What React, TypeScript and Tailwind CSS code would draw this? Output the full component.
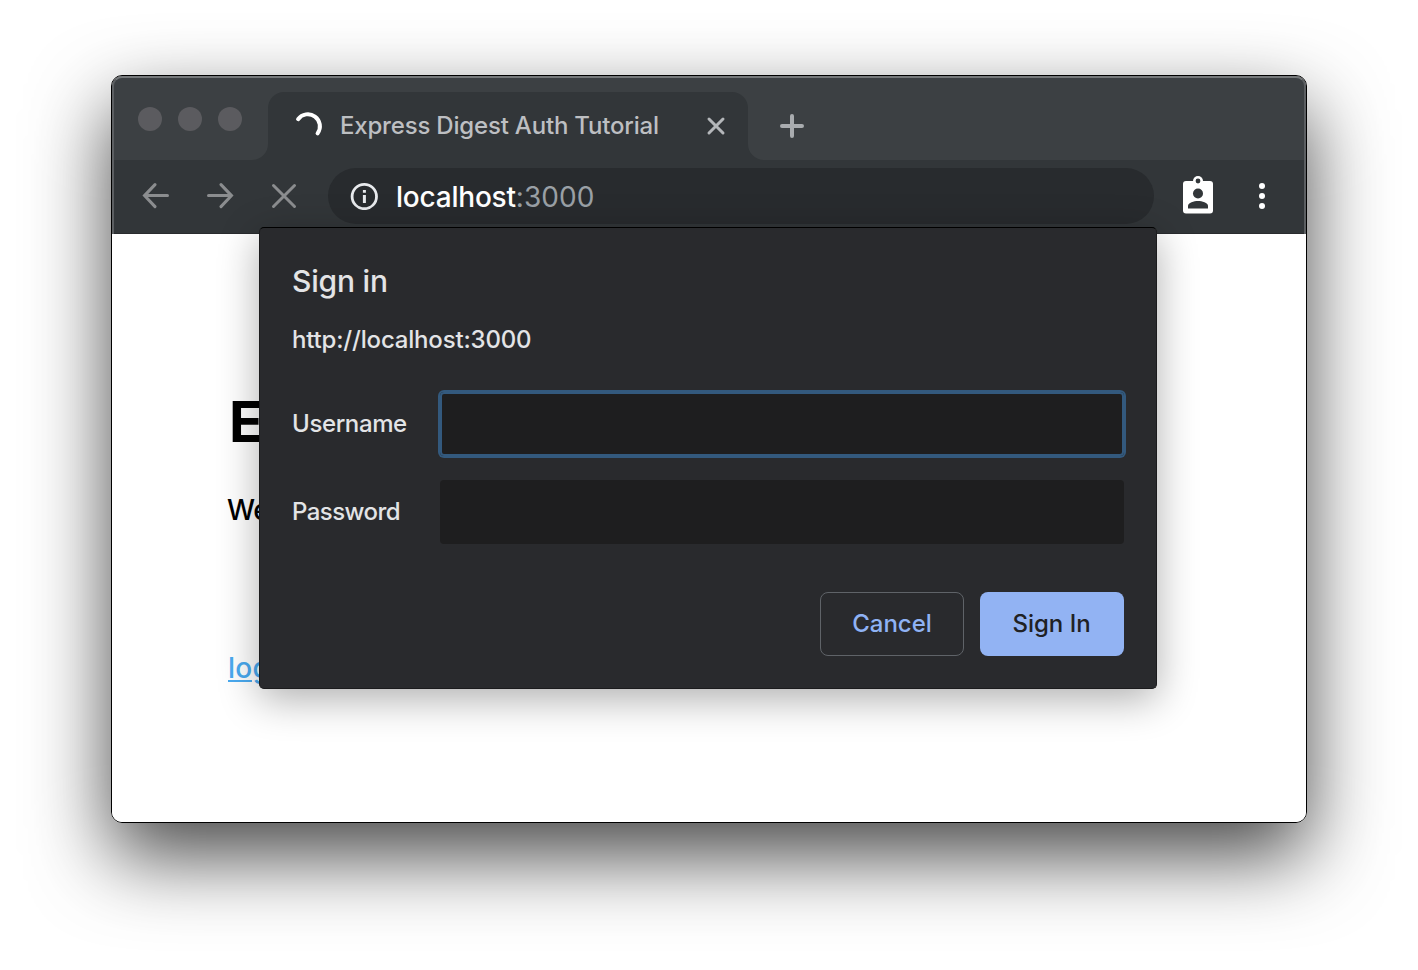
import React from "react";

function TrafficLights() {
  return (
    <div className="mt-[31px] ml-[26px] flex h-6 w-[130px] shrink-0 gap-4">
      <span className="size-6 rounded-full bg-[#5b5b5f]" />
      <span className="size-6 rounded-full bg-[#5b5b5f]" />
      <span className="size-6 rounded-full bg-[#5b5b5f]" />
    </div>
  );
}

function TabStrip() {
  return (
    <div className="flex h-[84px] bg-[#3c4043]">
      <TrafficLights />
      <div className="relative mt-4 flex h-[68px] w-[480px] shrink-0 items-center rounded-t-2xl bg-[#323639]">
        <svg className="absolute bottom-0 -left-4 size-4" viewBox="0 0 16 16" fill="#323639">
          <path d="M0 16A16 16 0 0 0 16 0V16Z" />
        </svg>
        <svg className="absolute -right-4 bottom-0 size-4" viewBox="0 0 16 16" fill="#323639">
          <path d="M16 16A16 16 0 0 1 0 0V16Z" />
        </svg>
        <svg className="ml-6 size-8 shrink-0" viewBox="0 0 32 32" fill="none" stroke="#fff" strokeWidth="4" strokeLinecap="round">
          <path d="M6.1 9.2A12 12 0 0 1 25.6 23.4" />
        </svg>
        <span className="ml-4 w-[340px] text-[24px] leading-8 font-[450] tracking-[-0.19px] whitespace-nowrap text-[#bdbfc2]">
          Express Digest Auth Tutorial
        </span>
        <svg className="ml-[26px] size-5 shrink-0" viewBox="0 0 20 20" fill="none" stroke="#b4b7ba" strokeWidth="3" strokeLinecap="round">
          <path d="M3 3 17 17M17 3 3 17" />
        </svg>
      </div>
      <svg className="mt-[38px] ml-8 size-6" viewBox="0 0 24 24" fill="none" stroke="#a9acaf" strokeWidth="4" strokeLinecap="round">
        <path d="M12 2V22M2 12H22" />
      </svg>
    </div>
  );
}

function Toolbar() {
  return (
    <div className="flex h-[74px] border-b border-[#292b2e] bg-[#323639]">
      <svg className="mt-[23px] ml-[30px] size-7 shrink-0" viewBox="0 0 28 28" fill="none" stroke="#8b8d8f" strokeWidth="3" strokeLinecap="round" strokeLinejoin="miter">
        <path d="M25.5 12.6H3M13 1.6 2.5 12.6 13 23.6" />
      </svg>
      <svg className="mt-[23px] ml-9 size-7 shrink-0" viewBox="0 0 28 28" fill="none" stroke="#8b8d8f" strokeWidth="3" strokeLinecap="round" strokeLinejoin="miter">
        <path d="M2.5 12.6H25M15 1.6 25.5 12.6 15 23.6" />
      </svg>
      <svg className="mt-[23px] ml-9 size-7 shrink-0" viewBox="0 0 28 28" fill="none" stroke="#8b8d8f" strokeWidth="3" strokeLinecap="round">
        <path d="M3.5 2.5 24.5 23.5M24.5 2.5 3.5 23.5" />
      </svg>
      <div className="mt-2 ml-[30px] flex h-14 w-[826px] shrink-0 items-center rounded-full bg-[#282b2e] pl-[22px]">
        <svg className="size-7 shrink-0" viewBox="0 0 28 28" fill="none">
          <circle cx="14.3" cy="14.5" r="12.2" stroke="#e8eaed" strokeWidth="2.8" />
          <path d="M12.9 8h3v2.8h-3zM12.9 13h3v8h-3z" fill="#e8eaed" />
        </svg>
        <span className="mt-px ml-[18px] text-[28px] leading-8 font-[450] tracking-[-0.22px] text-white">
          localhost<span className="font-normal tracking-[0.1px] text-[#9aa0a6]">:3000</span>
        </span>
      </div>
      <svg className="mt-4 ml-7 h-[38px] w-8 shrink-0" viewBox="0 0 32 38">
        <rect x="1" y="5" width="30" height="32.5" rx="3" fill="#fff" />
        <circle cx="16" cy="5" r="5" fill="#fff" />
        <circle cx="16" cy="5" r="2.4" fill="#323639" />
        <circle cx="16" cy="17.5" r="5" fill="#323639" />
        <path d="M6 32.5V30C6 26.7 12 25 16 25S26 26.7 26 30V32.5Z" fill="#323639" />
      </svg>
      <svg className="mt-[22px] ml-[45px] h-7 w-[6px] shrink-0" viewBox="0 0 6 28" fill="#fff">
        <circle cx="3" cy="4" r="3" />
        <circle cx="3" cy="14" r="3" />
        <circle cx="3" cy="24" r="3" />
      </svg>
    </div>
  );
}

function PageContent() {
  return (
    <main className="flex flex-1 flex-col items-start bg-white pl-[116px] text-black">
      <h1 className="mt-[154px] ml-px text-[56px] leading-[68px] font-bold">E</h1>
      <p className="mt-9 -ml-px text-[28px] leading-9 font-[450] tracking-[-0.5px]">We</p>
      <a href="#" className="mt-[122px] text-[28px] leading-9 font-[450] tracking-[0.3px] text-[#4aaaf0] underline decoration-2 underline-offset-2">
        log
      </a>
    </main>
  );
}

function SignInDialog() {
  return (
    <form
      onSubmit={(e) => e.preventDefault()}
      className="absolute top-[151px] left-[147px] flex h-[462px] w-[898px] flex-col rounded-[5px] border border-[#1b1b1d] border-t-black bg-[#292a2d] px-8 text-[#e3e4e6] shadow-[0_10px_40px_rgba(0,0,0,0.32)]"
    >
      <h2 className="mt-[33px] text-[30px] leading-10 font-[450] tracking-[-0.2px]">Sign in</h2>
      <p className="mt-[23px] text-[24px] leading-8 font-[450] tracking-[-0.18px]">http://localhost:3000</p>
      <div className="mt-[36px] flex h-16 items-center">
        <label htmlFor="username" className="w-[148px] text-[24px] leading-8 font-[450] tracking-[-0.38px]">Username</label>
        <input id="username" className="h-16 flex-1 rounded-[4px] bg-[#1e1e1f] shadow-[0_0_0_2px_#33597d,inset_0_0_0_2px_#33597d] outline-none" />
      </div>
      <div className="mt-6 flex h-16 items-center">
        <label htmlFor="password" className="w-[148px] text-[24px] leading-8 font-[450] tracking-[-0.55px]">Password</label>
        <input id="password" type="password" className="h-16 flex-1 rounded-[4px] bg-[#1e1e1f] outline-none" />
      </div>
      <div className="mt-12 flex justify-end gap-4 text-[24px] leading-8 font-medium">
        <button type="button" className="h-16 w-36 rounded-lg border border-[#5f6368] text-[#8fb2f4]">Cancel</button>
        <button type="submit" className="h-16 w-36 rounded-lg bg-[#92b3f3] pr-px text-[#202124]">Sign In</button>
      </div>
    </form>
  );
}

export default function App() {
  return (
    <div className="flex h-[970px] w-[1418px] overflow-hidden bg-white pt-[75px] pl-[111px] font-['Inter','Liberation_Sans',sans-serif]">
      <div className="relative flex h-[748px] w-[1196px] shrink-0 flex-col rounded-[11px] border border-black shadow-[0_33px_80px_rgba(0,0,0,0.72)]">
        <div className="flex flex-1 flex-col overflow-hidden rounded-[10px]">
          <header className="relative">
            <TabStrip />
            <Toolbar />
            <div className="pointer-events-none absolute inset-0 rounded-t-[10px] border-x-2 border-t-2 border-x-[#5c5f62] border-t-[#76797b]" />
          </header>
          <PageContent />
        </div>
        <SignInDialog />
      </div>
    </div>
  );
}
